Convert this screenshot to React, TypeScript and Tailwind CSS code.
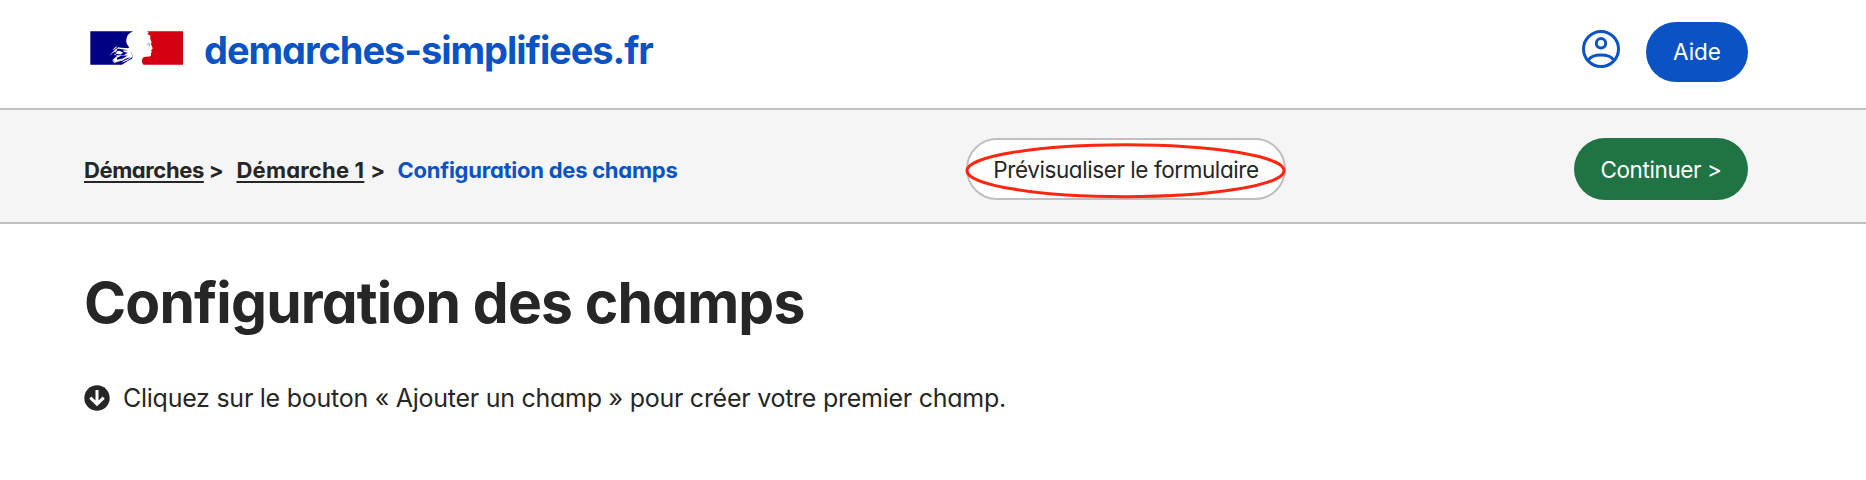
function FlagLogo() {
  return (
    <svg className="h-[34px] w-[93px] shrink-0" viewBox="58 62.5 280 102" preserveAspectRatio="none" aria-hidden="true">
      <path
        fill="#000082"
        d="M59 63H188L185 65L177 69L171 76L168 84L167 92L168 99L172 106L176 111L172 115L176 120L182 128L187 138L184 146L168 155L154 163.500H59Z"
      />
      <path
        fill="#d4000f"
        d="M230 63H338V163.500H219L215 158L214 151L217 143L224 140L238 139L242 135L241 130L244 126L242 121L247 114L242 104L243 95L239 85L240 77L235 74L230 72L235 68Z"
      />
      <path
        fill="#fff"
        d="M174 114L152 113L143 111L131 121L120 132L117 136L127 128L135 123L131 134L140 137L124 151L130 151L126 156L133 154L128 160L150 150L165 140L150 151L137 157L155 152L170 142L160 151L153 158L172 150L187 139L180 124Z"
      />
      <path
        fill="#000082"
        d="M141 115L160 118L173 120L156 121L163 126L172 128L160 135L138 135L132 131L138 122ZM139 143L152 137L172 136L156 145L140 149ZM144 155L158 152L172 143L180 142L168 149L152 155Z"
      />
      <path fill="#fff" d="M139 123L147 122L158 128L150 133L136 131ZM126 119L137 109L140 110L130 119Z" />
      <path d="M230 103L237 99L239 100M234 105L237 103V108" fill="none" stroke="#777" strokeWidth="2" />
    </svg>
  );
}

function AccountIcon() {
  return (
    <svg className="size-[46px]" viewBox="0 0 46 46" fill="none" stroke="#0b53c5" strokeWidth="3" aria-hidden="true">
      <circle cx="23" cy="23" r="17.500" />
      <circle cx="23" cy="17.300" r="4.700" />
      <path d="M10.300 34C12.500 30.500 17.500 29 23 29S33.500 30.500 35.700 34" />
    </svg>
  );
}

function ArrowDownIcon() {
  return (
    <svg className="size-[26px] shrink-0" viewBox="0 0 26 26" aria-hidden="true">
      <circle cx="13" cy="13" r="12.700" fill="#262626" />
      <path d="M13 5V18.500M6.300 12.700L13 19.200L19.700 12.700" fill="none" stroke="#fff" strokeWidth="3" />
    </svg>
  );
}

export default function App() {
  return (
    <div className="h-[480px] overflow-hidden bg-white font-[Inter,sans-serif] text-[#262626] [font-feature-settings:'cv11','ss03']">
      <header className="h-[110px] border-b-2 border-[#c1c1c1]">
        <div className="ml-[84px] flex w-[1664px] justify-between pt-[22px]">
          <a className="flex h-[52px] items-center pl-[5.500px]">
            <FlagLogo />
            <span className="ml-[21.500px] whitespace-nowrap pt-[3px] text-[38px] font-[650] leading-[52px] tracking-[-1.050px] text-[#0b53c5]">
              demarches-simplifiees.fr
            </span>
          </a>
          <div className="flex">
            <button className="mt-1 mr-[22px] size-[46px]">
              <AccountIcon />
            </button>
            <button className="h-[60px] w-[102px] rounded-[30px] bg-[#0b53c5] text-[22.500px] text-white">Aide</button>
          </div>
        </div>
      </header>

      <nav className="h-[114px] border-b-2 border-[#c1c1c1] bg-[#f5f5f5]">
        <div className="ml-[84px] flex w-[1664px] items-center pt-7">
          <ol className="flex w-[882px] items-center whitespace-nowrap pt-px text-[22px] font-[650] leading-[32px]">
            <li className="w-[152.500px]">
              <a className="tracking-[-0.400px] underline decoration-2 underline-offset-[3px]">Démarches</a>
              <span className="ml-[5px]">&gt;</span>
            </li>
            <li className="w-[161px]">
              <a className="tracking-[0.200px] underline decoration-2 underline-offset-[3px]">Démarche 1</a>
              <span className="ml-[6px]">&gt;</span>
            </li>
            <li className="tracking-[-0.250px] text-[#0b53c5]">Configuration des champs</li>
          </ol>
          <button className="relative h-[62px] w-[320px] whitespace-nowrap rounded-[31px] border-2 border-[#bfbfbf] bg-white pt-0.5 text-[22.500px] tracking-[-0.420px]">
            Prévisualiser le formulaire
            <svg className="absolute -top-0.5 -left-[3px] h-[62px] w-[322px]" viewBox="0 0 322 62" aria-hidden="true">
              <ellipse cx="160.500" cy="32.700" rx="158.500" ry="26" fill="none" stroke="#fb270f" strokeWidth="3" />
            </svg>
          </button>
          <button className="ml-auto h-[62px] w-[174px] whitespace-nowrap rounded-[31px] bg-[#207344] pt-0.5 text-[22.500px] tracking-[-0.400px] text-white">
            Continuer &gt;
          </button>
        </div>
      </nav>

      <main className="ml-[83px] w-[1664px]">
        <h1 className="pt-[43px] pl-px text-[57px] font-[650] leading-[72px] tracking-[-0.850px]">Configuration des champs</h1>
        <p className="mt-[41px] flex items-center pl-px text-[25px] leading-[36px]">
          <ArrowDownIcon />
          <span className="ml-[13px] whitespace-nowrap tracking-[-0.260px]">
            Cliquez sur le bouton « Ajouter un champ » pour créer votre premier champ.
          </span>
        </p>
      </main>
    </div>
  );
}
